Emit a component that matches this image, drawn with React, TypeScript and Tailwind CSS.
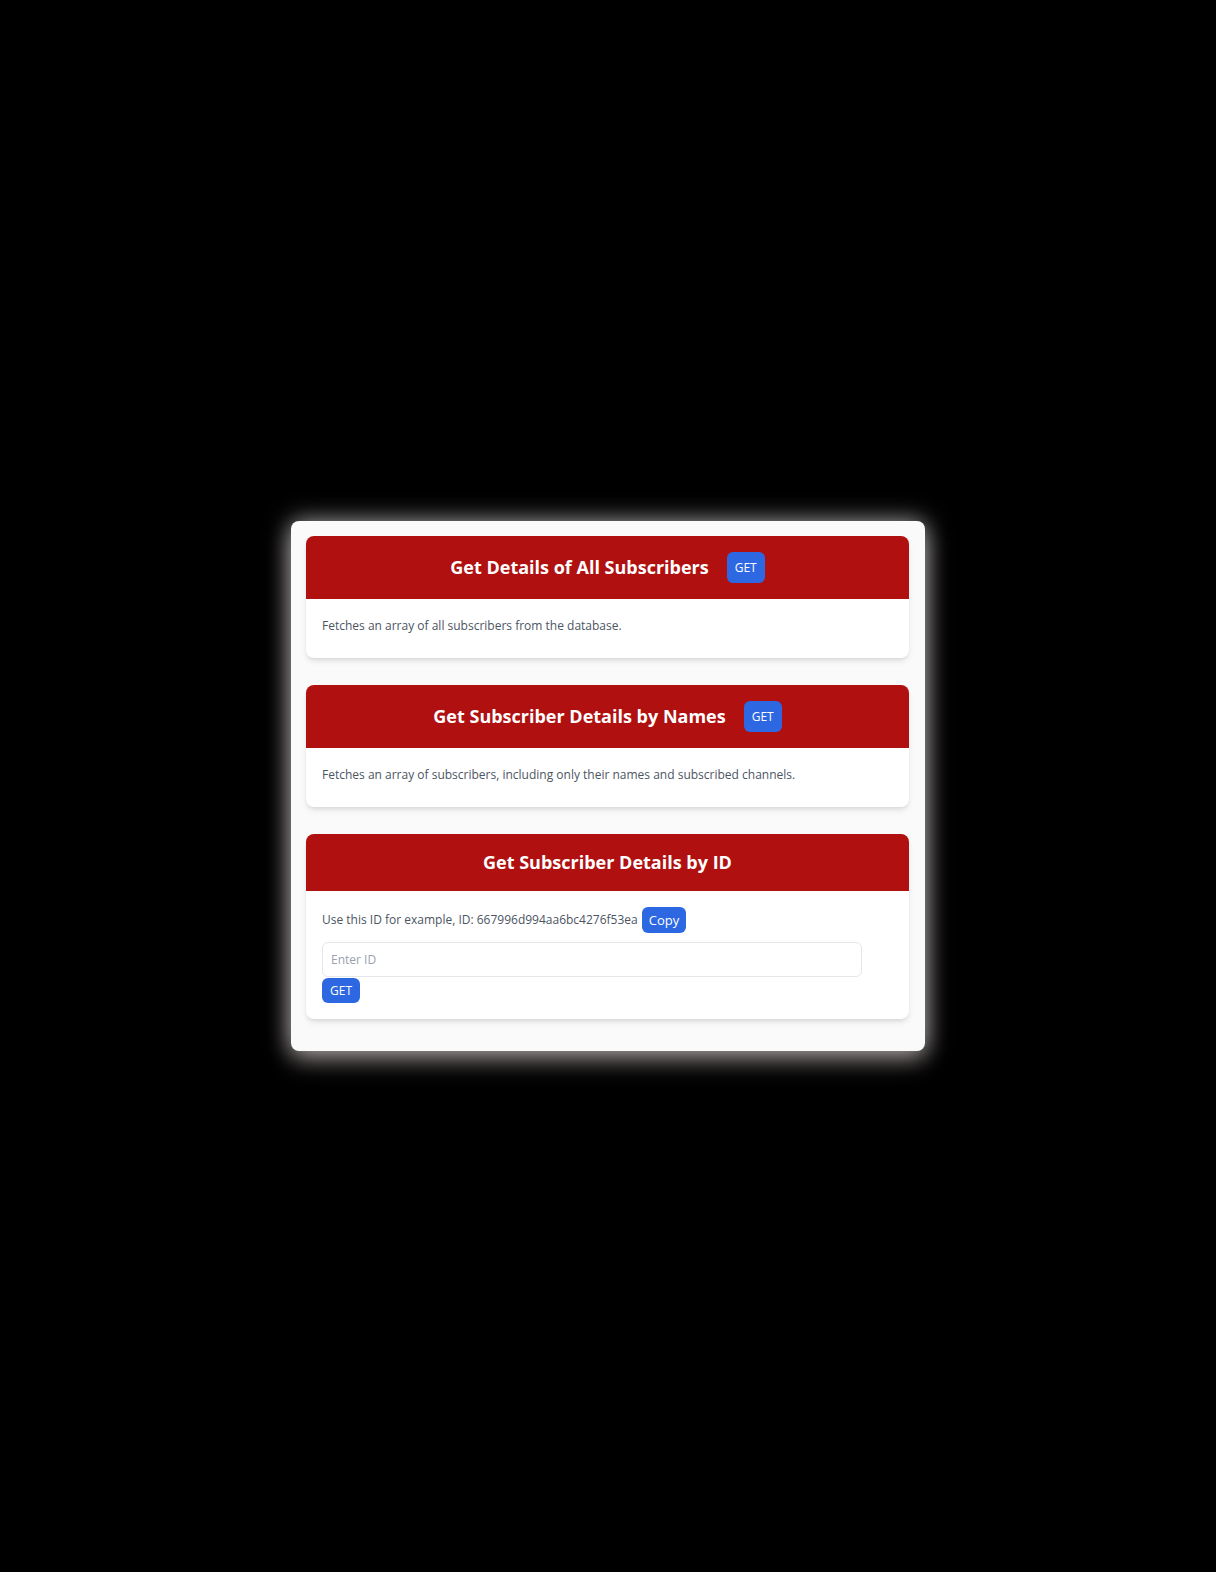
import { useState } from 'react'

const font = { fontFamily: '"Open Sans", "Noto Sans", Arial, sans-serif' }

function GetButton({ small }: { small?: boolean }) {
  return (
    <button
      className={`block bg-[#2d68e2] text-white text-[12px] leading-none px-2 rounded-md ${
        small ? 'h-[25px]' : 'h-[31px]'
      }`}
    >
      GET
    </button>
  )
}

function Card({
  title,
  withButton,
  last,
  children,
}: {
  title: string
  withButton?: boolean
  last?: boolean
  children: React.ReactNode
}) {
  return (
    <div className={`bg-white rounded-lg shadow-md overflow-hidden ${last ? '' : 'mb-[27px]'}`}>
      <div className="bg-[#b01010] py-4 flex items-center justify-center gap-[18px]">
        <h2 className="text-white text-[18px] font-bold leading-[25px]">{title}</h2>
        {withButton && <GetButton />}
      </div>
      {children}
    </div>
  )
}

export default function App() {
  const [id, setId] = useState('')
  const exampleId = '667996d994aa6bc4276f53ea'

  return (
    <div className="min-h-screen bg-black flex items-center justify-center" style={font}>
      <div className="w-[634px] bg-[#fafafa] rounded-lg pt-[15px] pb-[32px] pl-[15px] pr-[16px] shadow-[0_0_24px_rgba(255,255,255,0.6),0_10px_24px_rgba(255,225,225,0.35)]">
        {/* all subscribers */}
        <Card title="Get Details of All Subscribers" withButton>
          <div className="px-4 pt-[17px] pb-[22px]">
            <p className="text-[12px] leading-5 text-[#4b5563]">
              Fetches an array of all subscribers from the database.
            </p>
          </div>
        </Card>

        {/* names only */}
        <Card title="Get Subscriber Details by Names" withButton>
          <div className="px-4 pt-[17px] pb-[22px]">
            <p className="text-[12px] leading-5 text-[#4b5563]">
              Fetches an array of subscribers, including only their names and subscribed channels.
            </p>
          </div>
        </Card>

        {/* by id */}
        <Card title="Get Subscriber Details by ID" last>
          <div className="px-4 pt-4 pb-4">
            <div className="flex items-center h-[26px]">
              <span className="text-[12px] leading-5 text-[#4b5563]">
                Use this ID for example, ID: {exampleId}
              </span>
              <button
                onClick={() => navigator.clipboard?.writeText(exampleId)}
                className="ml-1 bg-[#2d68e2] text-white text-[13px] leading-none h-[26px] px-[7px] rounded-md"
              >
                Copy
              </button>
            </div>
            <input
              value={id}
              onChange={(e) => setId(e.target.value)}
              placeholder="Enter ID"
              className="mt-[9px] block w-[540px] h-[35px] px-2 text-[12px] border border-gray-200 rounded-md outline-none placeholder:text-gray-400"
            />
            <div className="mt-px flex">
              <GetButton small />
            </div>
          </div>
        </Card>
      </div>
    </div>
  )
}
